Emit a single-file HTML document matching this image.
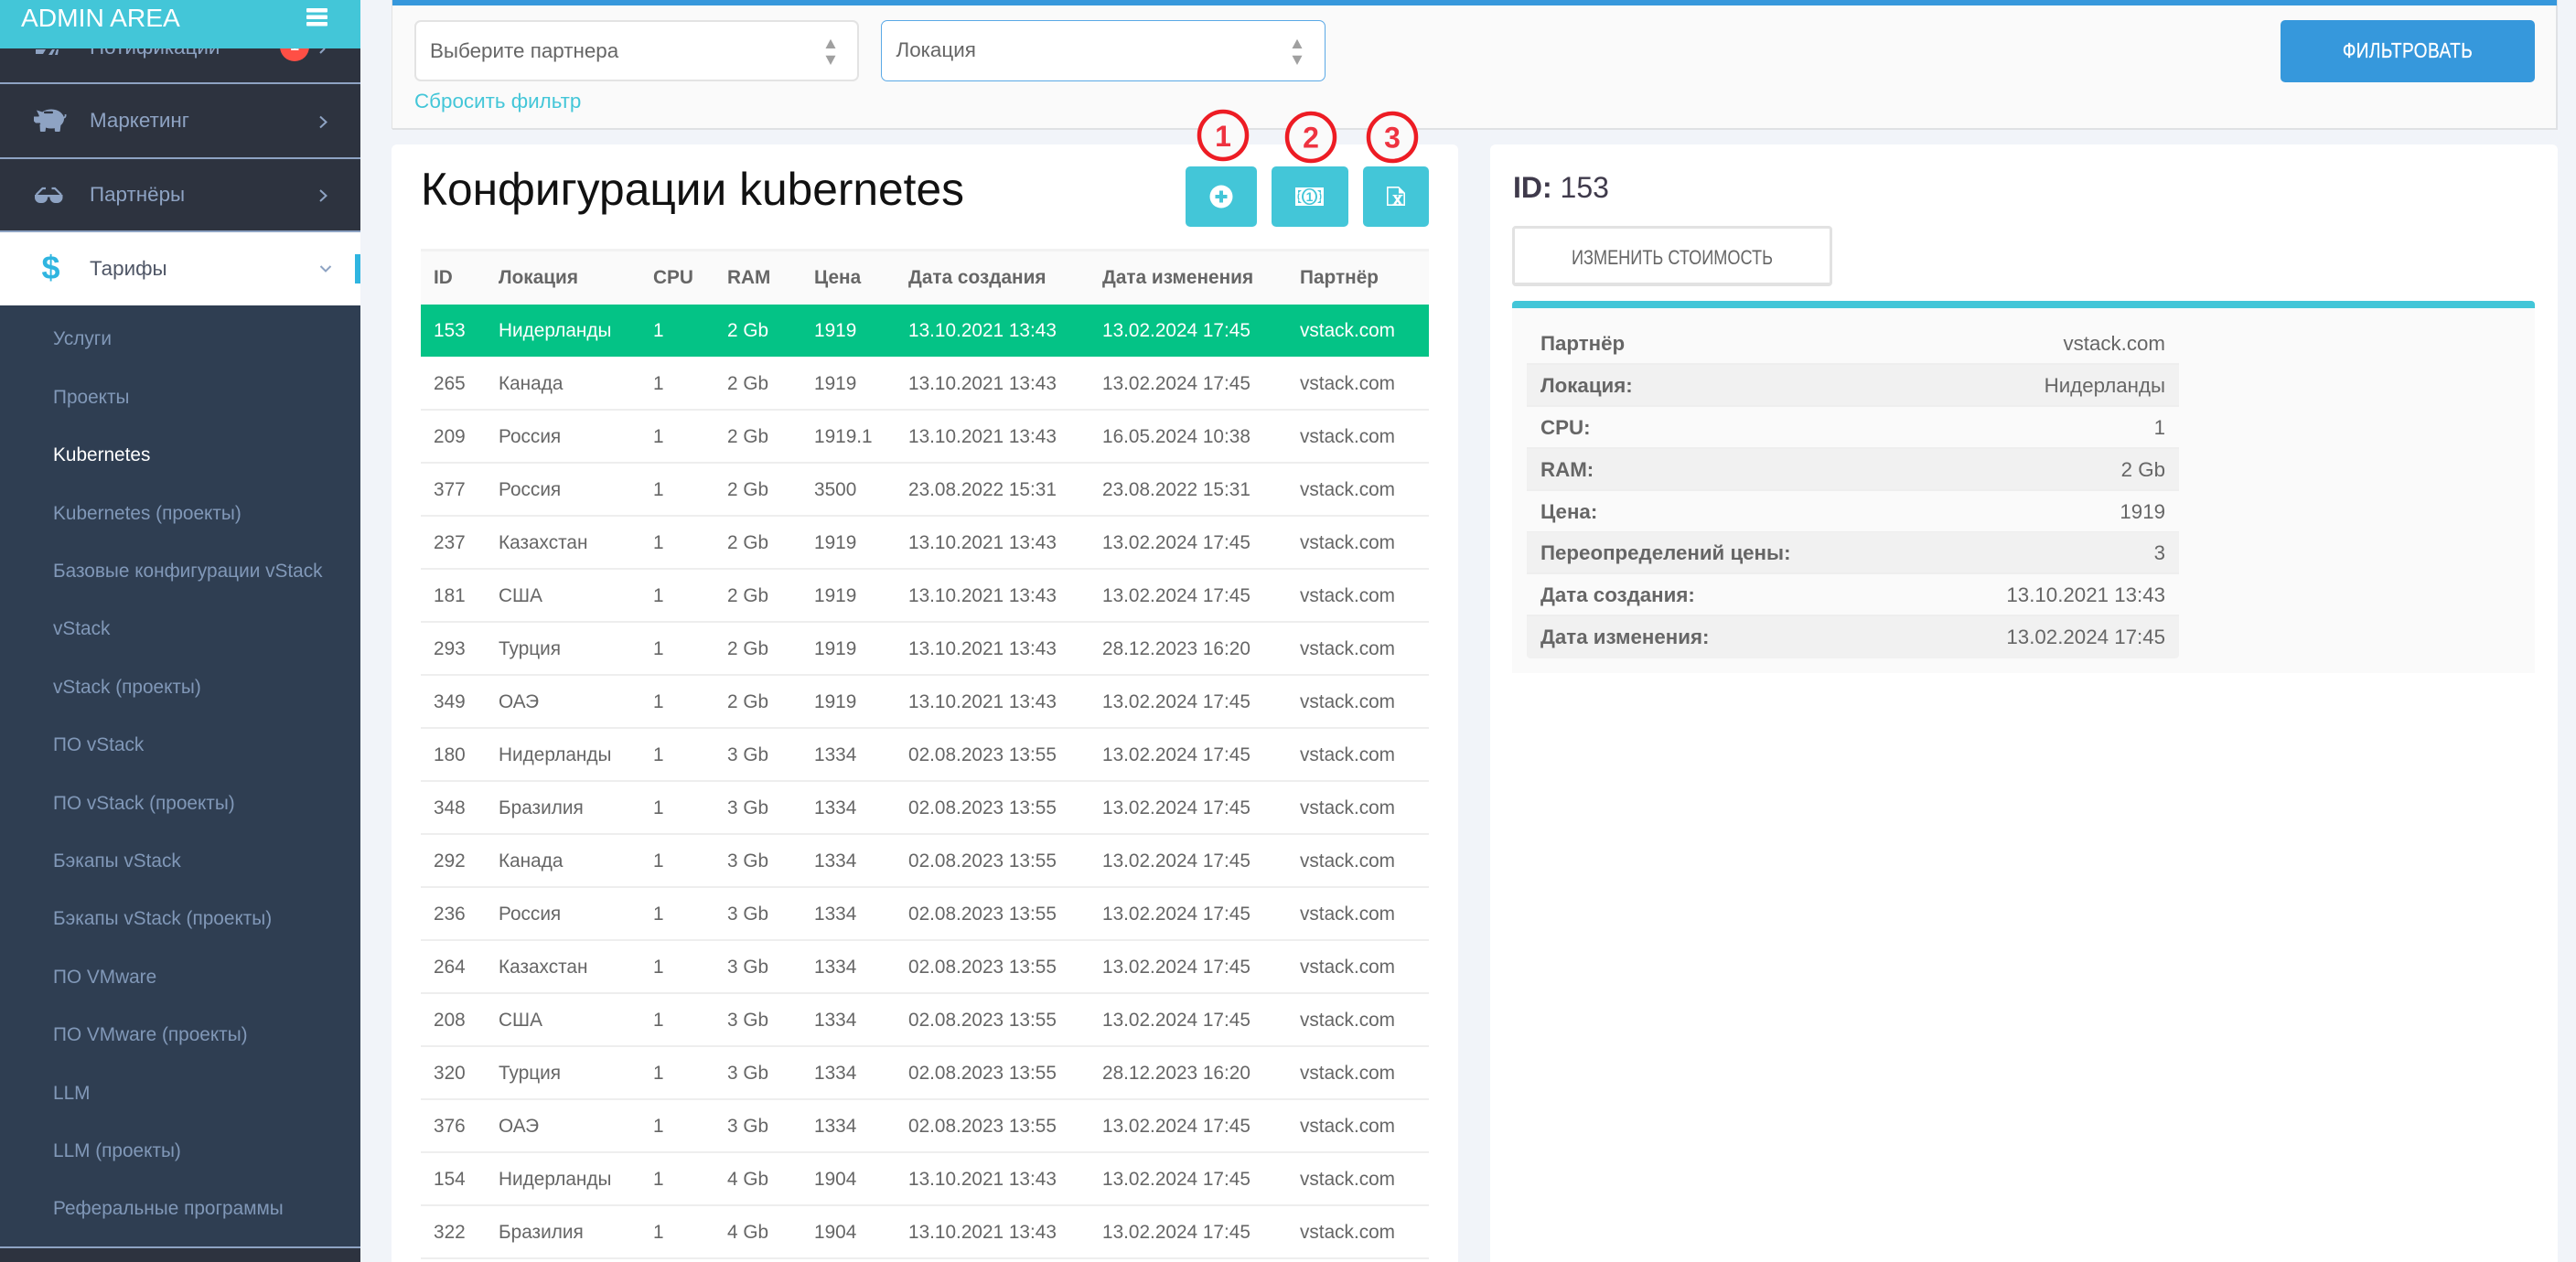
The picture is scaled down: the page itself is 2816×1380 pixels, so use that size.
<!DOCTYPE html>
<html lang="ru"><head><meta charset="utf-8"><title>Конфигурации kubernetes</title>
<style>
*{box-sizing:border-box}
html,body{margin:0;padding:0;width:2816px;height:1380px;overflow:hidden;background:#f1f4f9;font-family:"Liberation Sans",sans-serif;color:#666}
.a{position:absolute}
.t{position:absolute;white-space:nowrap}
.side{position:absolute;left:0;top:0;width:394px;height:1380px;background:#2d333f;overflow:hidden}
.sub{position:absolute;left:58px;font-size:20.8px;line-height:30px;color:#8198b8;white-space:nowrap}
.m{position:absolute;left:98px;font-size:22.4px;line-height:30px;color:#8ea3c3;white-space:nowrap}
.hr{position:absolute;left:0;width:394px;height:2px;background:#8ea3c3}
.row{position:absolute;left:460px;width:1102px;height:58px;border-bottom:2px solid #eeeeee;font-size:20.8px;line-height:57px;color:#666}
.row span{position:absolute;top:0;white-space:nowrap}
.c1{left:14px}.c2{left:85px}.c3{left:254px}.c4{left:335px}.c5{left:430px}.c6{left:533px}.c7{left:745px}.c8{left:961px}
.head{font-weight:bold;background:#fafafa;border-bottom:0;height:58px;top:275px;line-height:58px}
.sel{position:absolute;top:22px;height:67px;width:486px;background:#fff;border:2px solid #e3e3e3;border-radius:7px;font-size:22.4px;line-height:63px;padding-left:15px;color:#666}
.pr{position:absolute;left:1669px;width:713px;height:46px;font-size:22.3px;line-height:45px;border-bottom:2px solid #eeeeee;color:#666}
.pr b{position:absolute;left:15px;color:#666}
.pr span{position:absolute;right:15px}
.ev{background:#f1f1f1}
</style></head><body>

<div class="side">
  <div class="m" style="top:37px">Нотификации</div>
  <div class="hr" style="top:90px"></div>
  <div class="m" style="top:117px">Маркетинг</div>
  <div class="hr" style="top:172px"></div>
  <div class="m" style="top:198px">Партнёры</div>
  <div class="hr" style="top:252px"></div>
  <div class="a" style="left:0;top:254px;width:394px;height:80px;background:#fff"></div>
  <div class="m" style="top:279px;color:#4f5666">Тарифы</div>
  <div class="a" style="left:388px;top:278px;width:6px;height:32px;background:#2fb5e0"></div>
  <div class="t" style="left:45.500px;top:270px;font-size:36px;line-height:46px;font-weight:bold;color:#2fb5e0">$</div>
  <div class="a" style="left:0;top:334px;width:394px;height:1029px;background:#2f3e52"></div>
  <div class="a" style="left:0;top:1363px;width:394px;height:2px;background:#8ea3c3"></div>
  <div class="sub" style="top:356px">Услуги</div>
  <div class="sub" style="top:420px">Проекты</div>
  <div class="sub" style="top:483px;color:#fff">Kubernetes</div>
  <div class="sub" style="top:547px">Kubernetes (проекты)</div>
  <div class="sub" style="top:610px">Базовые конфигурации vStack</div>
  <div class="sub" style="top:673px">vStack</div>
  <div class="sub" style="top:737px">vStack (проекты)</div>
  <div class="sub" style="top:800px">ПО vStack</div>
  <div class="sub" style="top:864px">ПО vStack (проекты)</div>
  <div class="sub" style="top:927px">Бэкапы vStack</div>
  <div class="sub" style="top:990px">Бэкапы vStack (проекты)</div>
  <div class="sub" style="top:1054px">ПО VMware</div>
  <div class="sub" style="top:1117px">ПО VMware (проекты)</div>
  <div class="sub" style="top:1181px">LLM</div>
  <div class="sub" style="top:1244px">LLM (проекты)</div>
  <div class="sub" style="top:1307px">Реферальные программы</div>
  <div class="a" style="left:306px;top:35px;width:32px;height:32px;border-radius:50%;background:#ff4f45"></div>
  <div class="t" style="left:306px;top:36px;width:32px;text-align:center;font-size:20px;line-height:24px;color:#fff;font-family:'DejaVu Sans',sans-serif">1</div>
  <div class="a" style="left:0;top:0;width:394px;height:53px;background:#43c6d8"></div>
  <div class="t" style="left:23px;top:2px;font-size:28.200px;line-height:34px;color:#fff">ADMIN AREA</div>
  <svg class="a" style="left:0;top:0" width="394" height="340" viewBox="0 0 394 340">
    <g fill="#fff"><rect x="335" y="9" width="23" height="4.500" rx="1"/><rect x="335" y="16.500" width="23" height="4.500" rx="1"/><rect x="335" y="24" width="23" height="4.500" rx="1"/></g>
    <g fill="none" stroke="#8ea3c3" stroke-width="2">
      <path d="M350 127.500l6.500 6-6.500 6"/><path d="M350 208l6.500 6-6.500 6"/>
      <path d="M350.500 291l5.500 5.500 5.500-5.500"/>
      <path d="M350 58l5-5"/>
    </g>
    <path fill="#8ea3c3" d="M39 59h8l3-5H39zM53 60l4-6h3l-3 6zM60 60l2-6h2l-1 6z"/>
    <!-- piggy bank -->
    <ellipse cx="56" cy="130" rx="14" ry="10.500" fill="#8ea3c3"/>
    <path fill="#8ea3c3" d="M37 127.500h6v7h-4l-2-2zM40 120.500l8 2.500-4 6zM43.500 136h7l-.8 7c0 .6-.4 1-1 1h-3.800c-.6 0-1-.4-1-1zM59.500 136h7l-.8 7c0 .6-.4 1-1 1h-3.800c-.6 0-1-.4-1-1z"/>
    <path fill="none" stroke="#8ea3c3" stroke-width="1.800" d="M68 129c3 0 4-1.500 3.500-4"/>
    <rect x="48" y="121.700" width="10" height="2.400" rx="1" fill="#2d333f"/>
    <!-- glasses -->
    <path fill="#8ea3c3" d="M38 213h14v3c0 3-2.500 6-6 6h-2c-3.500 0-6-3-6-6zM54.500 213h14v3c0 3-2.500 6-6 6h-2c-3.500 0-6-3-6-6zM52 213h2.500v2.500H52z"/>
    <path fill="none" stroke="#8ea3c3" stroke-width="2.200" d="M39.500 213l7-7h3.500M67 213l-7-7h-3.500"/>
  </svg>
</div>

<!-- filter panel -->
<div class="a" style="left:428px;top:0;width:2px;height:141px;background:#e2e2e2"></div>
<div class="a" style="left:429px;top:0;width:2367px;height:142px;background:#fafafa;border-bottom:2px solid #dfe1e4;border-right:2px solid #dfe1e4"></div>
<div class="a" style="left:429px;top:0;width:2366px;height:6px;background:#3698dc"></div>
<div class="sel" style="left:453px">Выберите партнера</div>
<div class="sel" style="left:963px;border:1.500px solid #5aa9e6;padding-left:15.500px">Локация</div>
<div class="t" style="left:453px;top:96px;font-size:22.4px;line-height:30px;color:#43c6d8">Сбросить фильтр</div>
<div class="a" style="left:2493px;top:22px;width:278px;height:68px;background:#3698dc;border-radius:5px"></div>
<div class="t" style="left:2493px;top:40px;width:278px;text-align:center;font-size:23px;line-height:30px;color:#fff;letter-spacing:.5px;transform:scaleX(.83);-webkit-text-stroke:.3px #fff">ФИЛЬТРОВАТЬ</div>

<!-- left card -->
<div class="a" style="left:428px;top:158px;width:1166px;height:1222px;background:#fff;border-radius:6px 6px 0 0"></div>
<div class="t" style="left:460px;top:176px;font-size:49.700px;line-height:62px;color:#111">Конфигурации kubernetes</div>
<div class="a" style="left:1296px;top:182px;width:78px;height:66px;background:#43c6d8;border-radius:5px"></div>
<div class="a" style="left:1390px;top:182px;width:84px;height:66px;background:#43c6d8;border-radius:5px"></div>
<div class="a" style="left:1490px;top:182px;width:72px;height:66px;background:#43c6d8;border-radius:5px"></div>

<div class="a" style="left:460px;top:272px;width:1102px;height:3px;background:#f2f2f2"></div>
<div class="row head"><span class="c1">ID</span><span class="c2">Локация</span><span class="c3">CPU</span><span class="c4">RAM</span><span class="c5">Цена</span><span class="c6">Дата создания</span><span class="c7">Дата изменения</span><span class="c8">Партнёр</span></div>
<div class="row" style="top:333px;height:57px;background:#04c386;color:#fff;border:0"><span class="c1">153</span><span class="c2">Нидерланды</span><span class="c3">1</span><span class="c4">2 Gb</span><span class="c5">1919</span><span class="c6">13.10.2021 13:43</span><span class="c7">13.02.2024 17:45</span><span class="c8">vstack.com</span></div>
<div class="row" style="top:391px"><span class="c1">265</span><span class="c2">Канада</span><span class="c3">1</span><span class="c4">2 Gb</span><span class="c5">1919</span><span class="c6">13.10.2021 13:43</span><span class="c7">13.02.2024 17:45</span><span class="c8">vstack.com</span></div>
<div class="row" style="top:449px"><span class="c1">209</span><span class="c2">Россия</span><span class="c3">1</span><span class="c4">2 Gb</span><span class="c5">1919.1</span><span class="c6">13.10.2021 13:43</span><span class="c7">16.05.2024 10:38</span><span class="c8">vstack.com</span></div>
<div class="row" style="top:507px"><span class="c1">377</span><span class="c2">Россия</span><span class="c3">1</span><span class="c4">2 Gb</span><span class="c5">3500</span><span class="c6">23.08.2022 15:31</span><span class="c7">23.08.2022 15:31</span><span class="c8">vstack.com</span></div>
<div class="row" style="top:565px"><span class="c1">237</span><span class="c2">Казахстан</span><span class="c3">1</span><span class="c4">2 Gb</span><span class="c5">1919</span><span class="c6">13.10.2021 13:43</span><span class="c7">13.02.2024 17:45</span><span class="c8">vstack.com</span></div>
<div class="row" style="top:623px"><span class="c1">181</span><span class="c2">США</span><span class="c3">1</span><span class="c4">2 Gb</span><span class="c5">1919</span><span class="c6">13.10.2021 13:43</span><span class="c7">13.02.2024 17:45</span><span class="c8">vstack.com</span></div>
<div class="row" style="top:681px"><span class="c1">293</span><span class="c2">Турция</span><span class="c3">1</span><span class="c4">2 Gb</span><span class="c5">1919</span><span class="c6">13.10.2021 13:43</span><span class="c7">28.12.2023 16:20</span><span class="c8">vstack.com</span></div>
<div class="row" style="top:739px"><span class="c1">349</span><span class="c2">ОАЭ</span><span class="c3">1</span><span class="c4">2 Gb</span><span class="c5">1919</span><span class="c6">13.10.2021 13:43</span><span class="c7">13.02.2024 17:45</span><span class="c8">vstack.com</span></div>
<div class="row" style="top:797px"><span class="c1">180</span><span class="c2">Нидерланды</span><span class="c3">1</span><span class="c4">3 Gb</span><span class="c5">1334</span><span class="c6">02.08.2023 13:55</span><span class="c7">13.02.2024 17:45</span><span class="c8">vstack.com</span></div>
<div class="row" style="top:855px"><span class="c1">348</span><span class="c2">Бразилия</span><span class="c3">1</span><span class="c4">3 Gb</span><span class="c5">1334</span><span class="c6">02.08.2023 13:55</span><span class="c7">13.02.2024 17:45</span><span class="c8">vstack.com</span></div>
<div class="row" style="top:913px"><span class="c1">292</span><span class="c2">Канада</span><span class="c3">1</span><span class="c4">3 Gb</span><span class="c5">1334</span><span class="c6">02.08.2023 13:55</span><span class="c7">13.02.2024 17:45</span><span class="c8">vstack.com</span></div>
<div class="row" style="top:971px"><span class="c1">236</span><span class="c2">Россия</span><span class="c3">1</span><span class="c4">3 Gb</span><span class="c5">1334</span><span class="c6">02.08.2023 13:55</span><span class="c7">13.02.2024 17:45</span><span class="c8">vstack.com</span></div>
<div class="row" style="top:1029px"><span class="c1">264</span><span class="c2">Казахстан</span><span class="c3">1</span><span class="c4">3 Gb</span><span class="c5">1334</span><span class="c6">02.08.2023 13:55</span><span class="c7">13.02.2024 17:45</span><span class="c8">vstack.com</span></div>
<div class="row" style="top:1087px"><span class="c1">208</span><span class="c2">США</span><span class="c3">1</span><span class="c4">3 Gb</span><span class="c5">1334</span><span class="c6">02.08.2023 13:55</span><span class="c7">13.02.2024 17:45</span><span class="c8">vstack.com</span></div>
<div class="row" style="top:1145px"><span class="c1">320</span><span class="c2">Турция</span><span class="c3">1</span><span class="c4">3 Gb</span><span class="c5">1334</span><span class="c6">02.08.2023 13:55</span><span class="c7">28.12.2023 16:20</span><span class="c8">vstack.com</span></div>
<div class="row" style="top:1203px"><span class="c1">376</span><span class="c2">ОАЭ</span><span class="c3">1</span><span class="c4">3 Gb</span><span class="c5">1334</span><span class="c6">02.08.2023 13:55</span><span class="c7">13.02.2024 17:45</span><span class="c8">vstack.com</span></div>
<div class="row" style="top:1261px"><span class="c1">154</span><span class="c2">Нидерланды</span><span class="c3">1</span><span class="c4">4 Gb</span><span class="c5">1904</span><span class="c6">13.10.2021 13:43</span><span class="c7">13.02.2024 17:45</span><span class="c8">vstack.com</span></div>
<div class="row" style="top:1319px"><span class="c1">322</span><span class="c2">Бразилия</span><span class="c3">1</span><span class="c4">4 Gb</span><span class="c5">1904</span><span class="c6">13.10.2021 13:43</span><span class="c7">13.02.2024 17:45</span><span class="c8">vstack.com</span></div>

<!-- right card -->
<div class="a" style="left:1629px;top:158px;width:1167px;height:1222px;background:#fff;border-radius:6px 6px 0 0"></div>
<div class="t" style="left:1654px;top:185px;font-size:32px;line-height:40px;color:#3f3a4b"><b>ID:</b> 153</div>
<div class="a" style="left:1653px;top:247px;width:350px;height:66px;background:#fff;border:3px solid #e2e2e2;border-bottom-width:4px;border-radius:4px"></div>
<div class="t" style="left:1653px;top:267px;width:350px;text-align:center;font-size:22px;line-height:30px;color:#666;transform:scaleX(.825)">ИЗМЕНИТЬ СТОИМОСТЬ</div>
<div class="a" style="left:1653px;top:329px;width:1118px;height:407px;background:#fafafa;border-top:8px solid #43c6d8;border-radius:4px 4px 0 0"></div>
<div class="pr" style="top:353px"><b>Партнёр</b><span>vstack.com</span></div>
<div class="pr ev" style="top:399px"><b>Локация:</b><span>Нидерланды</span></div>
<div class="pr" style="top:445px"><b>CPU:</b><span>1</span></div>
<div class="pr ev" style="top:491px"><b>RAM:</b><span>2 Gb</span></div>
<div class="pr" style="top:537px"><b>Цена:</b><span>1919</span></div>
<div class="pr ev" style="top:582px"><b>Переопределений цены:</b><span>3</span></div>
<div class="pr" style="top:628px"><b>Дата создания:</b><span>13.10.2021 13:43</span></div>
<div class="pr ev" style="top:674px;border:0;border-radius:0 0 4px 4px"><b>Дата изменения:</b><span>13.02.2024 17:45</span></div>

<!-- overlay icons and annotations -->
<svg class="a" style="left:0;top:0" width="2816" height="1380" viewBox="0 0 2816 1380">
  <g fill="#a0a0a0">
    <path d="M908 42.700l5.500 10.300h-11zM908 71l5.500-10.300h-11z"/>
    <path d="M1418 42.700l5.500 10.300h-11zM1418 71l5.500-10.300h-11z"/>
  </g>
  <!-- plus circle -->
  <circle cx="1335" cy="215" r="12.500" fill="#fff"/>
  <path d="M1335 208.500v13M1328.500 215h13" stroke="#43c6d8" stroke-width="4"/>
  <!-- money -->
  <path fill="#fff" d="M1416 205h31v20h-31z"/>
  <path fill="#43c6d8" d="M1419 208h4l-4 3.500zM1444 208h-4l4 3.500zM1419 222h4l-4-3.500zM1444 222h-4l4-3.500z"/>
  <path fill="none" stroke="#43c6d8" stroke-width="1.500" d="M1420 211.500c-1 2-1 5 0 7M1443 211.500c1 2 1 5 0 7"/>
  <ellipse cx="1431.500" cy="215" rx="8.500" ry="9" fill="#43c6d8"/>
  <ellipse cx="1431.500" cy="215" rx="6.500" ry="7.500" fill="#fff"/>
  <text x="1431.500" y="220" font-family="Liberation Sans" font-size="14" font-weight="bold" text-anchor="middle" fill="#43c6d8">1</text>
  <!-- file excel -->
  <path fill="none" stroke="#fff" stroke-width="1.600" d="M1535.200 224.200h-18.400v-19.400h12l6.400 6.400z"/>
  <path fill="#fff" d="M1529 205v6.500h6.500z"/>
  <path stroke="#fff" stroke-width="2.400" d="M1524.500 214l6.500 9M1531 214l-6.500 9"/>
  <path stroke="#fff" stroke-width="1.200" d="M1522.500 213.600h5M1528.500 213.600h5M1522.500 223.400h5M1528.500 223.400h5"/>
  <!-- red annotations -->
  <g fill="#fafafa" stroke="#ed1c24" stroke-width="4.500">
    <ellipse cx="1337" cy="148" rx="26" ry="26"/>
    <ellipse cx="1433" cy="150" rx="26" ry="26"/>
    <ellipse cx="1522" cy="150" rx="26" ry="26"/>
  </g>
  <g font-family="Liberation Sans" font-weight="bold" font-size="32" fill="#ee3340" text-anchor="middle">
    <text x="1337" y="160">1</text>
    <text x="1433" y="161.500">2</text>
    <text x="1522" y="161.500">3</text>
  </g>
</svg>
</body></html>
